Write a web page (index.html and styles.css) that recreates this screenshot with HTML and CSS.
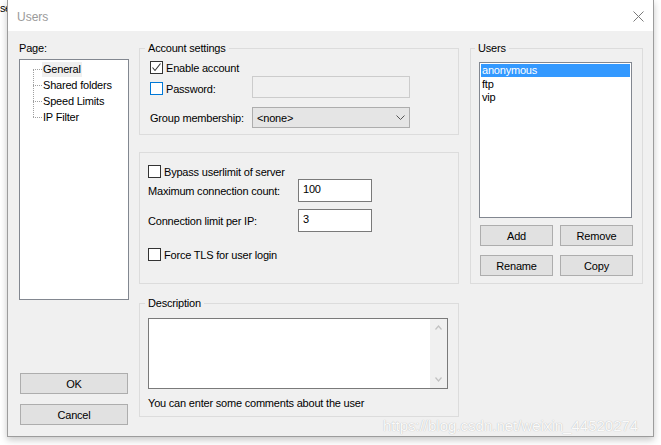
FILE: index.html
```html
<!DOCTYPE html>
<html>
<head>
<meta charset="utf-8">
<title>Users</title>
<link rel="stylesheet" href="styles.css">
</head>
<body>
<div class="bg-text">se</div>
<div class="window">
  <div class="titlebar">
    <span class="title">Users</span>
    <svg class="close" width="11" height="11" viewBox="0 0 11 11"><path d="M0.5 0.5 L10.5 10.5 M10.5 0.5 L0.5 10.5" stroke="#7a7a7a" stroke-width="1" fill="none"/></svg>
  </div>
  <div class="content">
    <div class="col-left">
      <div class="page-label">Page:</div>
      <div class="tree">
        <ul class="tree-list">
          <li><span class="node selected">General</span></li>
          <li><span class="node">Shared folders</span></li>
          <li><span class="node">Speed Limits</span></li>
          <li><span class="node">IP Filter</span></li>
        </ul>
      </div>
      <button class="btn btn-wide btn-ok">OK</button>
      <button class="btn btn-wide btn-cancel">Cancel</button>
    </div>

    <div class="col-mid">
      <fieldset class="group group-account">
        <legend class="legend legend-account">Account settings</legend>
        <div class="row row-check">
          <span class="checkbox checked"><svg width="11" height="11" viewBox="0 0 11 11"><path d="M1.5 5.5 L4 8.5 L9.5 1.5" stroke="#333" stroke-width="1.1" fill="none"/></svg></span>
          <span class="lbl">Enable account</span>
        </div>
        <div class="row row-pass">
          <div class="label-col-a">
            <span class="checkbox focus"></span>
            <span class="lbl">Password:</span>
          </div>
          <div class="input disabled"></div>
        </div>
        <div class="row row-group">
          <div class="label-col-a"><span class="lbl">Group membership:</span></div>
          <div class="select">
            <span class="select-text">&lt;none&gt;</span>
            <svg class="chev" width="10" height="6" viewBox="0 0 10 6"><path d="M0.5 0.5 L4.5 4.5 L8.5 0.5" stroke="#555" stroke-width="1" fill="none"/></svg>
          </div>
        </div>
      </fieldset>

      <div class="group group-limits">
        <div class="row row-check">
          <span class="checkbox"></span>
          <span class="lbl">Bypass userlimit of server</span>
        </div>
        <div class="row row-max">
          <div class="label-col-b"><span class="lbl">Maximum connection count:</span></div>
          <div class="input num">100</div>
        </div>
        <div class="row row-ip">
          <div class="label-col-b"><span class="lbl">Connection limit per IP:</span></div>
          <div class="input num">3</div>
        </div>
        <div class="row row-check row-tls">
          <span class="checkbox"></span>
          <span class="lbl">Force TLS for user login</span>
        </div>
      </div>

      <fieldset class="group group-desc">
        <legend class="legend legend-desc">Description</legend>
        <div class="textbox">
          <div class="textbox-area"></div>
          <div class="vscroll">
            <div class="arrow"><svg width="8" height="5" viewBox="0 0 8 5"><path d="M0.5 4.5 L3.5 1 L6.5 4.5" stroke="#c2c2c2" stroke-width="1.2" fill="none"/></svg></div>
            <div class="arrow"><svg width="8" height="5" viewBox="0 0 8 5"><path d="M0.5 0.5 L3.5 4 L6.5 0.5" stroke="#c2c2c2" stroke-width="1.2" fill="none"/></svg></div>
          </div>
        </div>
        <div class="hint">You can enter some comments about the user</div>
      </fieldset>
    </div>

    <div class="col-right">
      <fieldset class="group group-users">
        <legend class="legend legend-users">Users</legend>
        <div class="listbox">
          <div class="item selected">anonymous</div>
          <div class="item">ftp</div>
          <div class="item">vip</div>
        </div>
        <div class="btn-row">
          <button class="btn btn-small">Add</button>
          <button class="btn btn-small">Remove</button>
        </div>
        <div class="btn-row btn-row2">
          <button class="btn btn-small">Rename</button>
          <button class="btn btn-small">Copy</button>
        </div>
      </fieldset>
    </div>
  </div>
</div>
<div class="watermark">https://blog.csdn.net/weixin_44520274</div>
</body>
</html>
```

FILE: styles.css
```css
* { box-sizing: border-box; }

html, body {
  margin: 0;
  padding: 0;
}

body {
  position: relative;
  width: 661px;
  height: 445px;
  overflow: hidden;
  background: #ffffff;
  font-family: "Liberation Sans", Arial, sans-serif;
  font-size: 11px;
  letter-spacing: -0.2px;
  color: #000;
}

.bg-text {
  position: absolute;
  left: 0;
  top: 3px;
  width: 8px;
  overflow: hidden;
  font-size: 11px;
  line-height: 11px;
  letter-spacing: -0.5px;
  color: #000;
}

.window {
  position: relative;
  margin-left: 7px;
  width: 647px;
  height: 437px;
  border: 1px solid #9c9c9c;
  border-top: none;
  background: #f0f0f0;
  box-shadow: 0 3px 7px rgba(0, 0, 0, 0.22);
}

.titlebar {
  height: 31px;
  background: #ffffff;
  display: flex;
  align-items: center;
  padding-left: 9px;
  padding-right: 9px;
}

.title {
  font-size: 12px;
  letter-spacing: 0;
  color: #9a9a9a;
  line-height: 14px;
  margin-top: 2px;
}

.close {
  margin-left: auto;
  margin-top: 1px;
}

.content {
  display: flex;
  height: 405px;
  padding: 10px 0 0 11px;
}

/* left column */
.col-left {
  width: 110px;
  display: flex;
  flex-direction: column;
  padding-bottom: 11px;
}

.page-label {
  height: 14px;
  padding-top: 1px;
  line-height: 13px;
}

.tree {
  margin-top: 4px;
  height: 241px;
  background: #fff;
  border: 1px solid #828790;
  padding-top: 1px;
}

.tree-list {
  position: relative;
  list-style: none;
  margin: 0;
  padding: 0;
}

.tree-list::before {
  content: "";
  position: absolute;
  left: 13px;
  top: 8px;
  bottom: 8px;
  border-left: 1px dotted #a0a0a0;
}

.tree-list li {
  position: relative;
  height: 16px;
  padding-left: 22px;
}

.tree-list li::before {
  content: "";
  position: absolute;
  left: 13px;
  top: 8px;
  width: 9px;
  border-top: 1px dotted #a0a0a0;
}

.node {
  display: inline-block;
  padding: 0 1px;
  height: 15px;
  line-height: 15px;
  margin-top: 1px;
  vertical-align: top;
}

.node.selected {
  background: #efefef;
}

.btn {
  font-family: "Liberation Sans", Arial, sans-serif;
  font-size: 11px;
  letter-spacing: -0.2px;
  color: #000;
  background: #e1e1e1;
  border: 1px solid #adadad;
  padding: 1px 0 0 0;
  height: 21px;
  line-height: 18px;
  text-align: center;
}

.btn-wide {
  width: 108px;
  margin-left: 1px;
}

.btn-ok {
  margin-top: auto;
}

.btn-cancel {
  margin-top: 10px;
}

/* middle column */
.col-mid {
  width: 320px;
  margin-left: 10px;
  display: flex;
  flex-direction: column;
}

.group {
  margin: 0;
  border: 1px solid #dcdcdc;
  min-width: 0;
}

.legend {
  padding: 1px 3px 0 3px;
  line-height: 13px;
  height: 14px;
}

.group-account {
  padding: 6px 10px 6px 10px;
}

.legend-account { margin-left: -5px; }

.row {
  display: flex;
  align-items: center;
}

.row-check {
  height: 13px;
  gap: 3px;
}

.checkbox {
  width: 13px;
  height: 13px;
  border: 1px solid #333;
  background: #fff;
  display: inline-flex;
  align-items: center;
  justify-content: center;
  flex: none;
}

.checkbox.focus {
  border-color: #0078d7;
}

.lbl {
  display: inline-block;
  height: 13px;
  padding-top: 1px;
  line-height: 12px;
  white-space: nowrap;
}

.label-col-a {
  width: 102px;
  display: flex;
  align-items: center;
  gap: 3px;
}

.row-pass {
  margin-top: 2px;
  height: 22px;
}

.row-pass .checkbox {
  margin-top: 2px;
}

.row-pass .lbl {
  margin-top: 2px;
}

.row-group {
  margin-top: 9px;
  height: 21px;
}

.input {
  width: 158px;
  height: 22px;
  border: 1px solid #7a7a7a;
  background: #fff;
}

.input.disabled {
  background: #f0f0f0;
  border-color: #cccccc;
}

.select {
  width: 158px;
  height: 21px;
  border: 1px solid #adadad;
  background: #e5e5e5;
  display: flex;
  align-items: center;
  padding-left: 4px;
  padding-right: 3px;
}

.select-text {
  padding-top: 1px;
  line-height: 13px;
}

.chev {
  margin-left: auto;
  margin-top: 1px;
}

.group-limits {
  margin-top: 17px;
  padding: 12px 8px 22px 8px;
}

.label-col-b {
  width: 150px;
}

.row-max {
  margin-top: 1px;
  height: 23px;
}

.row-ip {
  margin-top: 7px;
  height: 23px;
}

.row-tls {
  margin-top: 16px;
}

.input.num {
  width: 74px;
  height: 23px;
  padding: 3px 0 0 4px;
  line-height: 13px;
}

.group-desc {
  margin-top: 12px;
  padding: 8px 8px 6px 8px;
}

.legend-desc { margin-left: -3px; }

.textbox {
  width: 300px;
  height: 71px;
  border: 1px solid #7a7a7a;
  background: #fff;
  display: flex;
}

.textbox-area {
  flex: 1;
}

.vscroll {
  width: 17px;
  background: #f0f0f0;
  display: flex;
  flex-direction: column;
  justify-content: space-between;
}

.arrow {
  height: 17px;
  display: flex;
  align-items: center;
  justify-content: center;
  padding-left: 1px;
}

.hint {
  margin-top: 7px;
  height: 14px;
  padding-top: 1px;
  line-height: 13px;
}

/* right column */
.col-right {
  width: 173px;
  margin-left: 11px;
}

.group-users {
  padding: 7px 8px 7px 8px;
}

.legend-users { margin-left: -4px; }

.listbox {
  width: 153px;
  height: 156px;
  border: 1px solid #828790;
  background: #fff;
  padding: 1px 1px 0 1px;
}

.item {
  height: 13px;
  line-height: 13px;
  padding-left: 1px;
}

.item + .item {
  padding-top: 1px;
  line-height: 12px;
}

.item.selected {
  background: #3399ff;
  color: #fff;
}

.btn-row {
  display: flex;
  gap: 7px;
  margin-top: 7px;
  margin-left: 1px;
}

.btn-row2 {
  margin-top: 9px;
}

.btn-small {
  width: 73px;
}

.watermark {
  position: absolute;
  left: 383px;
  top: 418px;
  font-family: "Liberation Sans", Arial, sans-serif;
  font-size: 15px;
  letter-spacing: 0;
  line-height: 15px;
  color: rgba(255, 255, 255, 0.95);
  text-shadow: 0 0 1px rgba(0, 0, 0, 0.3);
  white-space: nowrap;
}
```
